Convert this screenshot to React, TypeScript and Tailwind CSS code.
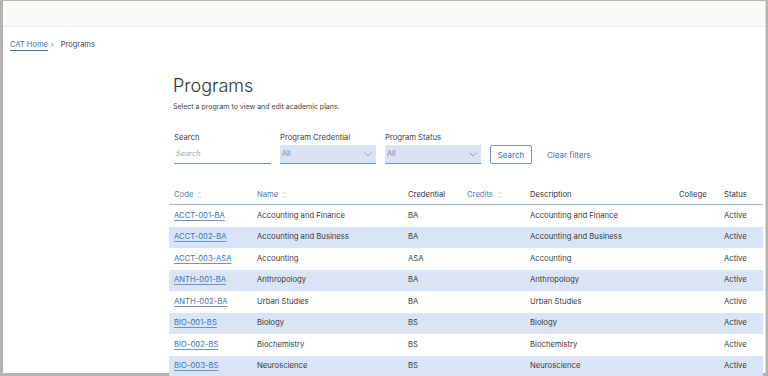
import React from "react";

const rows = [
  ["ACCT-001-BA", "Accounting and Finance", "BA"],
  ["ACCT-002-BA", "Accounting and Business", "BA"],
  ["ACCT-003-ASA", "Accounting", "ASA"],
  ["ANTH-001-BA", "Anthropology", "BA"],
  ["ANTH-002-BA", "Urban Studies", "BA"],
  ["BIO-001-BS", "Biology", "BS"],
  ["BIO-002-BS", "Biochemistry", "BS"],
  ["BIO-003-BS", "Neuroscience", "BS"],
];

const cols = "grid grid-cols-[83px_151px_59px_63px_149px_45px_1fr]";

function Sort() {
  return (
    <svg width="5" height="8" viewBox="0 0 5 8" className="ml-[4px] inline-block">
      <path d="M0.5 3 L2.5 1 L4.5 3" fill="none" stroke="#c5cfdc" strokeWidth="0.8" />
      <path d="M0.5 5 L2.5 7 L4.5 5" fill="none" stroke="#c5cfdc" strokeWidth="0.8" />
    </svg>
  );
}

function Chevron() {
  return (
    <svg width="8" height="5" viewBox="0 0 8 5">
      <path d="M0.5 0.5 L4 4 L7.5 0.5" fill="none" stroke="#8a9bb5" strokeWidth="0.9" />
    </svg>
  );
}

export default function App() {
  return (
    <div
      className="w-[768px] h-[376px] bg-[#b3b3b3] pl-[3px] pt-[1px] pr-[2px] pb-[3px] overflow-hidden"
      style={{ fontFamily: "Inter, 'Noto Sans', sans-serif" }}
    >
      <div className="w-full h-full bg-white flex flex-col border-r border-[#dcdcdc]">
        <div className="h-[26px] shrink-0 bg-[#fbfaf7] border-b border-[#f0eeea]" />
        <div className="pl-[7px] mt-[13px] h-[10px] leading-[10px] flex items-center text-[7.5px] text-[#444]">
          <span className="text-[#3d6fb3] border-b border-[#3d6fb3] leading-[10px]">CAT Home</span>
          <span className="ml-[3px] text-[#777]">›</span>
          <span className="ml-[7px]">Programs</span>
        </div>
        <div className="pl-[166px] pr-[2px] flex flex-col">
          <div className="mt-[24px] text-[18px] font-light text-[#333] leading-[24px] ml-[4px]">Programs</div>
          <div className="mt-[4px] text-[7px] text-[#444] leading-[10px] ml-[4px]">
            Select a program to view and edit academic plans.
          </div>
          <div className="mt-[21px] flex items-end ml-[5px] text-[7.7px]">
            <div className="flex flex-col w-[97px]">
              <span className="text-[#444] leading-[10px]">Search</span>
              <div className="mt-[2px] h-[19px] border-b border-[#6f93c4] flex items-center pl-[2px] text-[#a0a8b5] italic text-[7.3px]">
                Search
              </div>
            </div>
            <div className="flex flex-col w-[96px] ml-[9px]">
              <span className="text-[#444] leading-[10px]">Program Credential</span>
              <div className="mt-[2px] h-[19px] bg-[#d8e4f6] border-b border-[#6f93c4] flex items-center justify-between pl-[2px] pr-[4px] text-[#7a8aa3] text-[7.3px]">
                All
                <Chevron />
              </div>
            </div>
            <div className="flex flex-col w-[96px] ml-[9px]">
              <span className="text-[#444] leading-[10px]">Program Status</span>
              <div className="mt-[2px] h-[19px] bg-[#d8e4f6] border-b border-[#6f93c4] flex items-center justify-between pl-[2px] pr-[4px] text-[#7a8aa3] text-[7.3px]">
                All
                <Chevron />
              </div>
            </div>
            <div className="ml-[9px] h-[19px] w-[42px] border border-[#6f93c4] rounded-[2px] flex items-center justify-center text-[#3d6fb3] text-[8px]">
              Search
            </div>
            <div className="ml-[15px] h-[19px] flex items-center text-[#3d6fb3] text-[8px]">Clear filters</div>
          </div>
          <div className="mt-[22px] text-[7.7px]">
            <div className={`${cols} h-[19px] items-center border-b border-[#9fb3cf] pl-[5px]`}>
              <span className="text-[#4b78b8] flex items-center">Code<Sort /></span>
              <span className="text-[#4b78b8] flex items-center">Name<Sort /></span>
              <span className="text-[#333]">Credential</span>
              <span className="text-[#4b78b8] flex items-center">Credits<Sort /></span>
              <span className="text-[#333]">Description</span>
              <span className="text-[#333]">College</span>
              <span className="text-[#333]">Status</span>
            </div>
            {rows.map((r, i) => (
              <div
                key={r[0]}
                className={`${cols} h-[21.5px] items-center pl-[5px] ${i % 2 === 1 ? "bg-[#d9e5f7]" : "bg-white"}`}
              >
                <span className="text-[#3d6fb3] underline underline-offset-[2px] decoration-[#6f93c4]">{r[0]}</span>
                <span className="text-[#3a3a3a]">{r[1]}</span>
                <span className="text-[#3a3a3a]">{r[2]}</span>
                <span />
                <span className="text-[#3a3a3a]">{r[1]}</span>
                <span />
                <span className="text-[#3a3a3a]">Active</span>
              </div>
            ))}
          </div>
        </div>
      </div>
    </div>
  );
}
